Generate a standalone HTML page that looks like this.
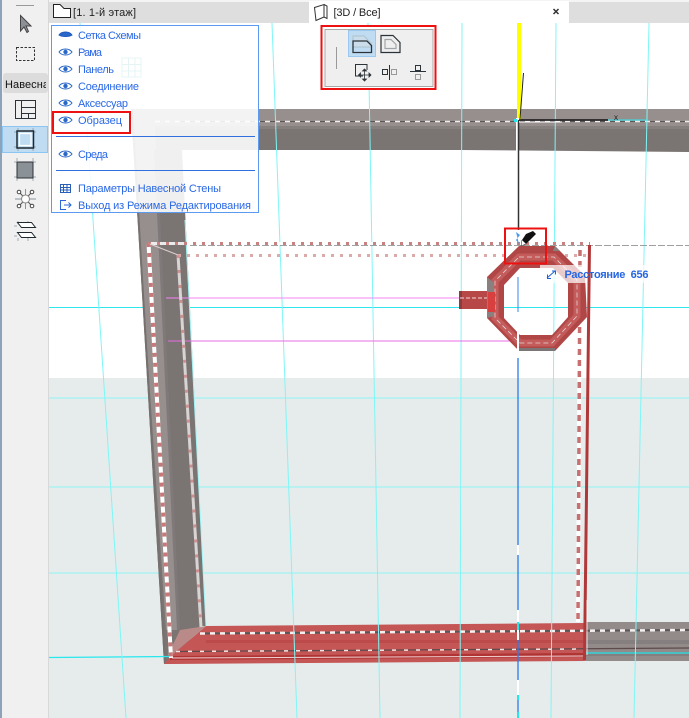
<!DOCTYPE html>
<html><head><meta charset="utf-8"><style>
html,body{margin:0;padding:0;background:#fff}
body{width:689px;height:718px;overflow:hidden;position:relative}
svg{position:absolute;left:0;top:0;display:block}
text{font-family:"Liberation Sans",sans-serif}
.m{font-size:11px;fill:#2a68e6}
</style></head><body>
<svg width="689" height="718" viewBox="0 0 689 718" xmlns="http://www.w3.org/2000/svg">
<rect width="689" height="718" fill="#fff"/>
<rect x="48" y="378" width="641" height="340" fill="#e6ecec"/>
<g stroke="#8ef4f4" stroke-width="1" fill="none">
<path d="M49 398H689M49 487H689M49 573H689"/>
</g>
<g stroke="#2ee6ee" stroke-width="1" fill="none">
<path d="M49 307.500H689"/>
</g>
<!-- walls -->
<path d="M131 109H689V152L460 150H182L206 626H200L172 664H164Z" fill="#7a7473"/>
<path d="M131 109H689V126H155L178 630H166Z" fill="#968f8e"/>
<path d="M155 126H689V129H155Z" fill="#857f7e"/>
<path d="M157 150L180 630H177L154 150Z" fill="#80797a"/>
<path d="M131 109L164 664H166L133 109Z" fill="#76716f"/>
<path d="M585 622H689V661H585Z" fill="#928b8a"/>
<path d="M585 640H689V644H585ZM585 652H689V656H585Z" fill="#85807f"/>
<!-- bottom red -->
<path d="M206 626L584 623L585 661L172 664L164 664L172 655Z" fill="#c55656"/>
<path d="M206 626L172 655H168L180 630Z" fill="#b98a88"/>
<path d="M206 640H584V643H206Z" fill="#bd4a4a"/>
<path d="M170 656L585 653V657L170 660Z" fill="#b03434"/>
<path d="M172 658L585 656" stroke="#f0d0d0" stroke-width="1" fill="none"/>
<!-- bottom dashes -->
<path d="M200 633.500L689 630" stroke="#5e5656" stroke-width="2" fill="none"/>
<path d="M200 633.500L689 630" stroke="#f4f0f0" stroke-width="2.500" stroke-dasharray="5 5" fill="none"/>
<path d="M176 651.500L689 648" stroke="#5e4a4a" stroke-width="1.200" fill="none"/>
<path d="M176 651.500L585 649" stroke="#f0e4e4" stroke-width="1.500" stroke-dasharray="4 8" fill="none"/>
<path d="M49 657.500L170 656.500M586 653H689" stroke="#26e8ee" stroke-width="1.200" fill="none"/>
<!-- wall dashes top -->
<path d="M180 121.500H689" stroke="#5c5655" stroke-width="1" fill="none"/>
<path d="M155 121.500H689" stroke="#f2eeee" stroke-width="1.500" stroke-dasharray="5 5" fill="none"/>
<!-- cyan verticals -->
<g stroke="#7ff6f6" stroke-width="1" fill="none">
<path d="M80 23L126 718"/>
<path d="M272 23L297 718"/>
<path d="M368 23L380 718"/>
<path d="M462 23L460 718"/>
<path d="M556 23L551 718"/>
<path d="M649 23L634 718"/>
</g>
<path d="M185 220L206 626" stroke="#a4f6f6" stroke-width="1" fill="none"/>
<!-- pink lines -->
<path d="M166 298H487" stroke="#f684f4" stroke-width="1" fill="none"/>
<path d="M168 341H520" stroke="#e86ce6" stroke-width="1" fill="none"/>
<!-- rose dashed frame -->
<path d="M148.500 243L171 658" stroke="#fff" stroke-width="4" fill="none"/>
<path d="M148.500 243L171 658" stroke="#c87878" stroke-width="4" stroke-dasharray="4 6" fill="none"/>
<path d="M148 243.500H590" stroke="#fff" stroke-width="3" fill="none" opacity=".85"/>
<path d="M148 243.500H590" stroke="#c88080" stroke-width="3" stroke-dasharray="3 6" fill="none"/>
<path d="M190 245.500H689" stroke="#888" stroke-width="1" stroke-dasharray="7 2" fill="none" opacity=".8"/>
<path d="M178 255.500H590" stroke="#dcaaa8" stroke-width="3" stroke-dasharray="3 6" fill="none"/>
<path d="M178 255L201 627" stroke="#d8d4d4" stroke-width="3" fill="none"/>
<path d="M178 255L201 627" stroke="#cf9090" stroke-width="3" stroke-dasharray="3 12" fill="none"/>
<path d="M150 244L178 255" stroke="#e0d0d0" stroke-width="1" fill="none"/>
<path d="M580 250L578 622" stroke="#fff" stroke-width="4" fill="none"/>
<path d="M580 250L578 622" stroke="#c87070" stroke-width="3.500" stroke-dasharray="6 5" fill="none"/>
<!-- octagon -->
<path d="M459 291H488V309H459Z" fill="#b84848"/>
<path d="M459 291H462V309H459Z" fill="#8c3c3c"/>
<path d="M460 298H488" stroke="#f0dcdc" stroke-width="1" stroke-dasharray="4 2" fill="none"/>
<path fill-rule="evenodd" d="M519 246H555L585 276L587 317L555 351H519L487 318V277ZM520 268L504 285V318L520 335H552L568 317V283L553 268Z" fill="#b04646"/>
<path d="M519 257H554L577 280V316L552 343H520L495 318V281Z" fill="none" stroke="#c45c5c" stroke-width="7"/>
<path d="M519 257H554L577 280V316L552 343H520L495 318V281Z" fill="none" stroke="#e4d6d6" stroke-width=".8" stroke-dasharray="5 3"/>
<path d="M487 277L494 283V316L487 318ZM555 246L560 251H553Z" fill="#8a8080"/>
<path d="M488 292H495V312H488Z" fill="#d84040"/>
<path d="M519 351H555V348H519Z" fill="#7c7676"/>
<!-- tooltip backing -->
<rect x="540" y="265" width="112" height="18" fill="#fff" opacity=".72"/>
<path d="M589.500 245L584.500 660" stroke="#b03838" stroke-width="3" fill="none"/>
<path d="M587 600V655" stroke="#fff" stroke-width="1" opacity=".8"/>
<!-- axis -->
<path d="M519 23V120" stroke="#ffff00" stroke-width="4" fill="none"/>
<path d="M523.500 73L520 119" stroke="#222" stroke-width="1" fill="none"/>
<path d="M517.500 118V230" stroke="#fff" stroke-width="3" fill="none"/>
<path d="M518.500 120V230" stroke="#333" stroke-width="1.500" fill="none"/>
<path d="M519 120H608" stroke="#111" stroke-width="1.500" fill="none"/>
<path d="M519 122H562" stroke="#fff" stroke-width="1" fill="none"/>
<path d="M608 120H648" stroke="#2ee6ee" stroke-width="1" fill="none"/>
<rect x="514" y="119" width="3" height="3" fill="#29e6f0"/>
<text x="614" y="120" font-size="8" fill="#222">x</text>
<!-- blue vertical -->
<path d="M518 277V312" stroke="#3b86f0" stroke-width="1" fill="none"/>
<path d="M518 332V358" stroke="#fff" stroke-width="2" fill="none"/>
<path d="M518 358V718" stroke="#2a7cf0" stroke-width="1.300" fill="none"/>
<path d="M518 545V555M518 610V622M518 630V640M518 680V700" stroke="#fff" stroke-width="2" fill="none"/>
<path d="M518 622V630M518 695V700M518 712V718" stroke="#22e8ee" stroke-width="2" fill="none"/>
<!-- red pencil box -->
<rect x="505" y="228.500" width="41" height="35" fill="none" stroke="#ee1111" stroke-width="2"/>
<path d="M516 232L520 235L516 240L519 244" fill="#3a8ff0" opacity=".9"/>
<path d="M526 234L533 231L536 234L525 245L521 246L522 240Z" fill="#111"/>
<path d="M522 240L521 246L526 244" fill="#fff" stroke="#222" stroke-width=".5"/>
<!-- tooltip -->
<path d="M547 278L555 271M552 271H555.500V274.500M547.500 274.500V278.500H551" stroke="#2060d8" stroke-width="1" fill="none"/>
<text x="564.500" y="278" font-size="11" font-weight="bold" fill="#2566e2" textLength="84" xml:space="preserve">Расстояние  656</text>
<!-- top bar -->
<rect x="48" y="0" width="641" height="23" fill="#dedede"/>
<rect x="48" y="0" width="641" height="2" fill="#f4f4f4"/>
<rect x="309" y="1" width="260" height="22" fill="#fff"/>
<path d="M53.500 4.500H60L64 8.500H70.500V17.500H53.500Z" fill="#fff" stroke="#222" stroke-width="1"/>
<text x="73" y="16" font-size="11" fill="#222" textLength="63">[1. 1-й этаж]</text>
<path d="M314.500 7.500L324 4.500V17L316 20.500L314.500 7.500ZM324 17L327 18.500V6L324 4.500" fill="#fff" stroke="#333" stroke-width="1"/>
<text x="333.500" y="16" font-size="11" fill="#222" textLength="47">[3D / Все]</text>
<path d="M553.500 9L558.500 14M558.500 9L553.500 14" stroke="#333" stroke-width="1.500" fill="none"/>
<!-- sidebar -->
<rect x="0" y="0" width="48" height="718" fill="#f0f0f0"/>
<rect x="0" y="0" width="2" height="718" fill="#8fa3b8"/>
<rect x="48" y="0" width="1" height="718" fill="#d8d8d8"/>
<path d="M16 5.500H34" stroke="#999" stroke-width="1"/>
<path d="M20.500 15.500V31L24 27L27 32.500L28.500 31.500L26 26H31Z" fill="#8b9197" stroke="#444" stroke-width="1"/>
<rect x="16.500" y="47.500" width="18" height="13" fill="none" stroke="#333" stroke-dasharray="2.500 1.500"/>
<rect x="3" y="73" width="45" height="20" rx="3" fill="#dcdcdc"/>
<svg x="3" y="73" width="43" height="20"><text x="2" y="15" font-size="11" fill="#111" textLength="44">Навесна</text></svg>
<g fill="none" stroke="#2c3338" stroke-width="1">
<rect x="15.500" y="100.500" width="20" height="18"/>
<path d="M21.500 100.500V118.500M21.500 107.500H35.500M21.500 113.500H35.500M28.500 113.500V118.500"/>
</g>
<rect x="2.500" y="126.500" width="45" height="26" fill="#c0dcf3" stroke="#8cc4f2"/>
<g fill="none" stroke="#8a949c" stroke-width="1" opacity=".75">
<path d="M14 132H17M33 132H36M14 147H17M33 147H36M18 128V131M33 128V131M18 148V151M33 148V151"/>
<path d="M14 162H17M33 162H36M14 177H17M33 177H36M17 158V161M33 158V161M17 178V181M33 178V181"/>
<path d="M14 226H17M14 236H17M18 221V224M28 221V224M18 238V241M28 238V241"/>
</g>
<rect x="17" y="131" width="16.500" height="17" fill="#c0dcf3" stroke="#1f2a30" stroke-width="1.500"/>
<rect x="19.500" y="133.500" width="11.500" height="12" fill="none" stroke="#fff" stroke-width="1.200"/>
<rect x="17" y="162" width="16" height="16" fill="#8b9297" stroke="#2c3338" stroke-width="1"/>
<path d="M25.500 189V209M15 199H36" stroke="#8a949c" fill="none"/>
<path d="M20 193L31 205M31 193L20 205" stroke="#555" fill="none"/>
<circle cx="25.500" cy="199" r="4" fill="#fff" stroke="#888"/>
<g fill="#fff" stroke="#444"><circle cx="19" cy="192" r="1.800"/><circle cx="32" cy="192" r="1.800"/><circle cx="19" cy="206" r="1.800"/><circle cx="32" cy="206" r="1.800"/></g>
<g fill="#fff" stroke="#1f2a30" stroke-width="1"><path d="M17.500 222.500H31.500L35.500 227.500H21.500Z"/><path d="M17.500 232.500H31.500L35.500 237.500H21.500Z"/></g>
<!-- menu -->
<rect x="51.500" y="25.500" width="207" height="187" fill="#fff" fill-opacity=".89" stroke="#5a9af0" stroke-width="1"/>
<path d="M122 58h19v19h-19zM128.500 58v19M135 58v19M122 64.500h19M122 71h19" fill="none" stroke="#e4f4f4" stroke-width="1"/>
<path d="M56 136.500H255M56 170.500H255" stroke="#2f6fe0" stroke-width="1"/>
<defs>
<g id="e"><path d="M0 0C3 -4 10 -4 13 0C10 4 3 4 0 0Z" fill="none" stroke="#2a68c8" stroke-width="1"/><circle cx="6.500" cy="0" r="2.200" fill="#2a68c8"/></g>
</defs>
<path d="M59 35C62 31 69 31 72 35C69 37 62 37 59 35Z" fill="#2a68c8" stroke="#1f58c0"/>
<use href="#e" x="59" y="52"/><use href="#e" x="59" y="69"/><use href="#e" x="59" y="86"/><use href="#e" x="59" y="103"/><use href="#e" x="59" y="120"/><use href="#e" x="59" y="154"/>
<text class="m" x="78" y="39" textLength="63">Сетка Схемы</text>
<text class="m" x="78" y="56" textLength="24">Рама</text>
<text class="m" x="78" y="73" textLength="36">Панель</text>
<text class="m" x="78" y="90" textLength="61">Соединение</text>
<text class="m" x="78" y="107" textLength="50">Аксессуар</text>
<text class="m" x="78" y="124" textLength="44">Образец</text>
<text class="m" x="78" y="158" textLength="30">Среда</text>
<text class="m" x="78" y="192" textLength="143">Параметры Навесной Стены</text>
<text class="m" x="78" y="209" textLength="173">Выход из Режима Редактирования</text>
<g fill="none" stroke="#2a5fb8" stroke-width="1"><rect x="60.500" y="184.500" width="10" height="8"/><path d="M63.500 184.500V192.500M67 184.500V192.500M60.500 187.500H70.500M60.500 190H70.500"/></g>
<path d="M66 200.500H60.500V209.500H66M64 205H71M68.500 202.500L71 205L68.500 207.500" fill="none" stroke="#2a68d8" stroke-width="1"/>
<rect x="53" y="112" width="77" height="21" fill="none" stroke="#ee1111" stroke-width="2"/>
<!-- toolbar -->
<rect x="321.500" y="26" width="114" height="63" fill="#fff" stroke="#ee1111" stroke-width="2"/>
<rect x="325" y="29.500" width="108" height="57" fill="#efefef" stroke="#a8a8a8" stroke-width="1"/>
<path d="M336.500 47V69" stroke="#999" stroke-width="1"/>
<rect x="348.500" y="30.500" width="27" height="26" fill="#c0dcf3" stroke="#9cc8f0"/>
<path d="M353 36H364L371 43V47H353Z" fill="#d6dee4" opacity=".5" stroke="#9aa" stroke-width="1"/>
<path d="M353 41H367L371.500 45.500V52.500H353Z" fill="none" stroke="#2c3338" stroke-width="1.300"/>
<path d="M381 35.500H393L400 42.500V52.500H381Z" fill="none" stroke="#2c3338" stroke-width="1.200"/>
<path d="M385 39.500H391L396 44.500V48.500H385Z" fill="none" stroke="#a0a4a8" stroke-width="1.200"/>
<path d="M363 76H355.500V64.500H367V70" fill="none" stroke="#2c3338" stroke-width="1"/>
<path d="M364.500 70V80M359.500 75H370M364.500 69L362.500 71H366.500ZM364.500 81L362.500 79H366.500ZM358.500 75L360.500 73V77ZM371 75L369 73V77Z" fill="#2c3338" stroke="#2c3338" stroke-width=".8"/>
<rect x="382.500" y="69.500" width="5" height="5" fill="none" stroke="#2c3338"/>
<path d="M389.500 65V80" stroke="#2c3338"/>
<rect x="391.500" y="69.500" width="5" height="5" fill="none" stroke="#999"/>
<rect x="415.500" y="65.500" width="5" height="5" fill="none" stroke="#2c3338"/>
<path d="M410 71.500H426" stroke="#2c3338"/>
<rect x="415.500" y="74.500" width="5" height="5" fill="none" stroke="#999"/>
</svg>
</body></html>
